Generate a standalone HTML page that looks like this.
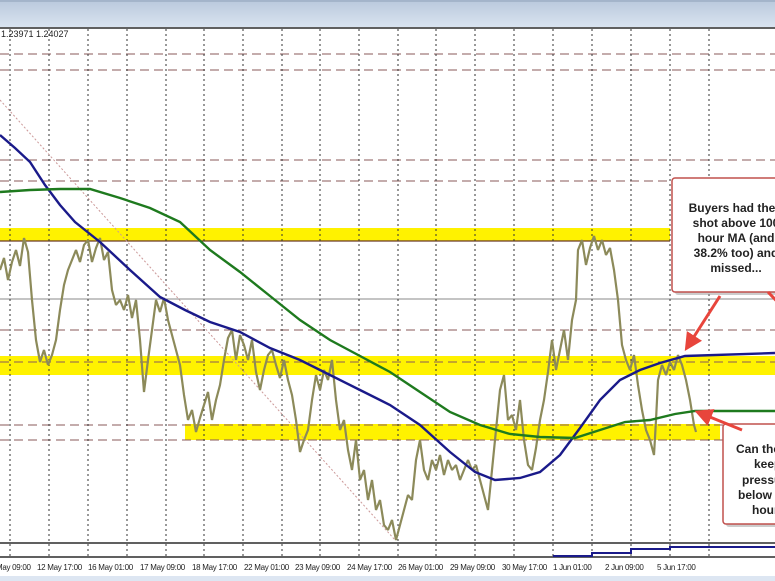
<!DOCTYPE html>
<html><head><meta charset="utf-8"><style>
html,body{margin:0;padding:0;width:775px;height:581px;overflow:hidden;background:#fff}
svg{display:block}
text{font-family:"Liberation Sans",sans-serif}
</style></head><body>
<svg width="775" height="581" viewBox="0 0 775 581" xmlns="http://www.w3.org/2000/svg">
<defs>
<linearGradient id="tb" x1="0" y1="0" x2="0" y2="1"><stop offset="0" stop-color="#b9c8dc"/><stop offset="1" stop-color="#d9e3f0"/></linearGradient>
<marker id="ah" markerWidth="6" markerHeight="6" refX="4" refY="3" orient="auto"><path d="M0,0 L6,3 L0,6 z" fill="#e8453c"/></marker>
</defs>
<rect x="0" y="0" width="775" height="27" fill="url(#tb)"/>
<line x1="0" y1="1" x2="775" y2="1" fill="none" stroke="#8da0b8"/>
<line x1="0" y1="28" x2="775" y2="28" stroke="#000" stroke-width="1.2"/>
<rect x="0" y="228" width="670" height="13" fill="#fff200"/>
<rect x="0" y="356" width="775" height="19" fill="#fff200"/>
<rect x="185" y="424" width="535" height="16" fill="#fff200"/>
<g stroke="#8a5a5a" stroke-dasharray="9,5" stroke-width="1">
<line x1="0" y1="54" x2="775" y2="54"/><line x1="0" y1="70" x2="775" y2="70"/>
<line x1="0" y1="160" x2="775" y2="160"/><line x1="0" y1="181" x2="775" y2="181"/>
<line x1="0" y1="330" x2="775" y2="330"/><line x1="0" y1="362" x2="775" y2="362"/>
<line x1="0" y1="425" x2="775" y2="425"/><line x1="0" y1="440" x2="775" y2="440"/>
</g>
<line x1="0" y1="241" x2="670" y2="241" stroke="#6a3a2a" stroke-width="1.2"/>
<line x1="0" y1="299" x2="775" y2="299" stroke="#888" stroke-width="1"/>
<g stroke="#333" stroke-dasharray="2,3" stroke-width="1">
<line x1="10" y1="29" x2="10" y2="557"/><line x1="49" y1="29" x2="49" y2="557"/><line x1="88" y1="29" x2="88" y2="557"/><line x1="127" y1="29" x2="127" y2="557"/><line x1="166" y1="29" x2="166" y2="557"/><line x1="204" y1="29" x2="204" y2="557"/><line x1="243" y1="29" x2="243" y2="557"/><line x1="282" y1="29" x2="282" y2="557"/><line x1="320" y1="29" x2="320" y2="557"/><line x1="359" y1="29" x2="359" y2="557"/><line x1="398" y1="29" x2="398" y2="557"/><line x1="436" y1="29" x2="436" y2="557"/><line x1="475" y1="29" x2="475" y2="557"/><line x1="514" y1="29" x2="514" y2="557"/><line x1="553" y1="29" x2="553" y2="557"/><line x1="592" y1="29" x2="592" y2="557"/><line x1="631" y1="29" x2="631" y2="557"/><line x1="670" y1="29" x2="670" y2="557"/><line x1="709" y1="29" x2="709" y2="557"/>
</g>
<line x1="0" y1="100" x2="395" y2="540" stroke="#c99" stroke-dasharray="2,2"/>
<polyline fill="none" stroke="#8c8a5a" stroke-width="2.2" stroke-linejoin="bevel" points="0,270 4,258 8,280 12,262 16,250 20,266 24,238 28,252 32,300 36,340 40,362 44,350 48,365 52,355 56,340 60,310 64,285 68,270 72,260 76,250 80,262 84,245 88,240 92,262 96,248 100,238 104,260 108,252 112,290 116,305 120,300 124,310 128,295 132,318 136,300 140,340 144,392 148,360 152,330 156,300 160,312 164,298 168,320 172,335 176,350 180,365 184,395 188,420 192,410 196,432 200,418 204,405 208,392 212,420 216,400 220,385 224,360 228,338 232,330 236,360 240,335 244,345 248,360 252,340 256,372 260,390 264,370 268,355 272,350 276,365 280,378 284,360 288,380 292,395 296,420 300,452 304,440 308,430 312,400 316,375 320,390 324,370 328,380 332,360 336,400 340,430 344,420 348,450 352,470 356,440 360,480 364,470 368,500 372,480 376,510 380,500 384,525 388,530 392,520 396,540 400,525 404,510 408,495 412,500 416,460 420,440 424,470 428,480 432,460 436,470 440,455 444,475 448,460 452,470 456,465 460,480 464,470 468,460 472,470 476,465 480,480 484,495 488,510 492,470 496,430 500,390 504,375 508,420 512,415 516,430 520,400 524,440 528,465 532,470 536,448 540,420 544,400 548,372 552,340 556,370 560,350 564,330 568,360 572,320 576,300 578,250 582,240 586,265 590,248 594,236 598,250 602,240 606,255 610,248 614,270 618,300 622,345 626,360 630,370 634,355 638,385 642,410 646,430 650,440 654,455 656,420 658,380 662,365 666,375 670,362 674,370 678,355 682,365 686,380 690,400 694,425 696,432"/>
<polyline fill="none" stroke="#1a1a8a" stroke-width="2.4" points="0,135 15,148 30,162 45,185 60,205 75,222 100,242 130,270 160,297 185,310 210,322 240,332 270,348 300,360 330,375 360,390 390,405 420,425 450,452 475,472 495,480 520,478 540,472 560,455 580,428 600,400 620,380 640,370 660,363 685,356 775,353"/>
<polyline fill="none" stroke="#1e7a1e" stroke-width="2.4" points="0,192 30,190 60,189 90,189 120,198 150,208 180,222 210,250 240,272 270,296 300,320 330,340 360,356 390,372 420,392 450,412 480,425 510,434 540,437 575,438 600,430 625,422 650,420 675,414 695,411 775,411"/>
<line x1="0" y1="543" x2="775" y2="543" stroke="#000" stroke-width="1.2"/>
<line x1="0" y1="557" x2="775" y2="557" stroke="#000" stroke-width="1.2"/>
<polyline fill="none" stroke="#1a1a8a" stroke-width="2" points="553,556 592,556 592,553 631,553 631,549 670,549 670,547 775,547"/>
<rect x="0" y="576" width="775" height="5" fill="#dde6f2"/>
<g font-size="8" fill="#222" letter-spacing="-0.3">
<text x="-4" y="570">May 09:00</text><text x="37" y="570">12 May 17:00</text><text x="88" y="570">16 May 01:00</text><text x="140" y="570">17 May 09:00</text><text x="192" y="570">18 May 17:00</text><text x="244" y="570">22 May 01:00</text><text x="295" y="570">23 May 09:00</text><text x="347" y="570">24 May 17:00</text><text x="398" y="570">26 May 01:00</text><text x="450" y="570">29 May 09:00</text><text x="502" y="570">30 May 17:00</text><text x="553" y="570">1 Jun 01:00</text><text x="605" y="570">2 Jun 09:00</text><text x="657" y="570">5 Jun 17:00</text>
</g>
<text x="1" y="37" font-size="9" fill="#222">1.23971 1.24027</text>
<rect x="675" y="181" width="125" height="114" rx="3" fill="#999" opacity="0.5"/>
<rect x="672" y="178" width="125" height="114" rx="3" fill="#fff" stroke="#c0504d" stroke-width="1.5"/>
<g font-size="12" font-weight="bold" fill="#222" text-anchor="middle">
<text x="736" y="212">Buyers had their</text><text x="736" y="227">shot above 100</text><text x="736" y="242">hour MA (and</text><text x="736" y="257">38.2% too) and</text><text x="736" y="272">missed...</text>
</g>
<rect x="726" y="427" width="70" height="100" rx="3" fill="#999" opacity="0.5"/>
<rect x="723" y="424" width="70" height="100" rx="3" fill="#fff" stroke="#c0504d" stroke-width="1.5"/>
<g font-size="12" font-weight="bold" fill="#222">
<text x="736" y="453">Can the</text><text x="754" y="468">keep</text><text x="742" y="484">pressure</text><text x="738" y="499">below</text><text x="752" y="514">hour</text>
</g>
<g stroke="#e8453c" stroke-width="3" fill="none">
<line x1="720" y1="296" x2="688" y2="346" marker-end="url(#ah)"/>
<line x1="768" y1="292" x2="790" y2="315"/>
<line x1="742" y1="430" x2="700" y2="413" marker-end="url(#ah)"/>
</g>
</svg>
</body></html>
